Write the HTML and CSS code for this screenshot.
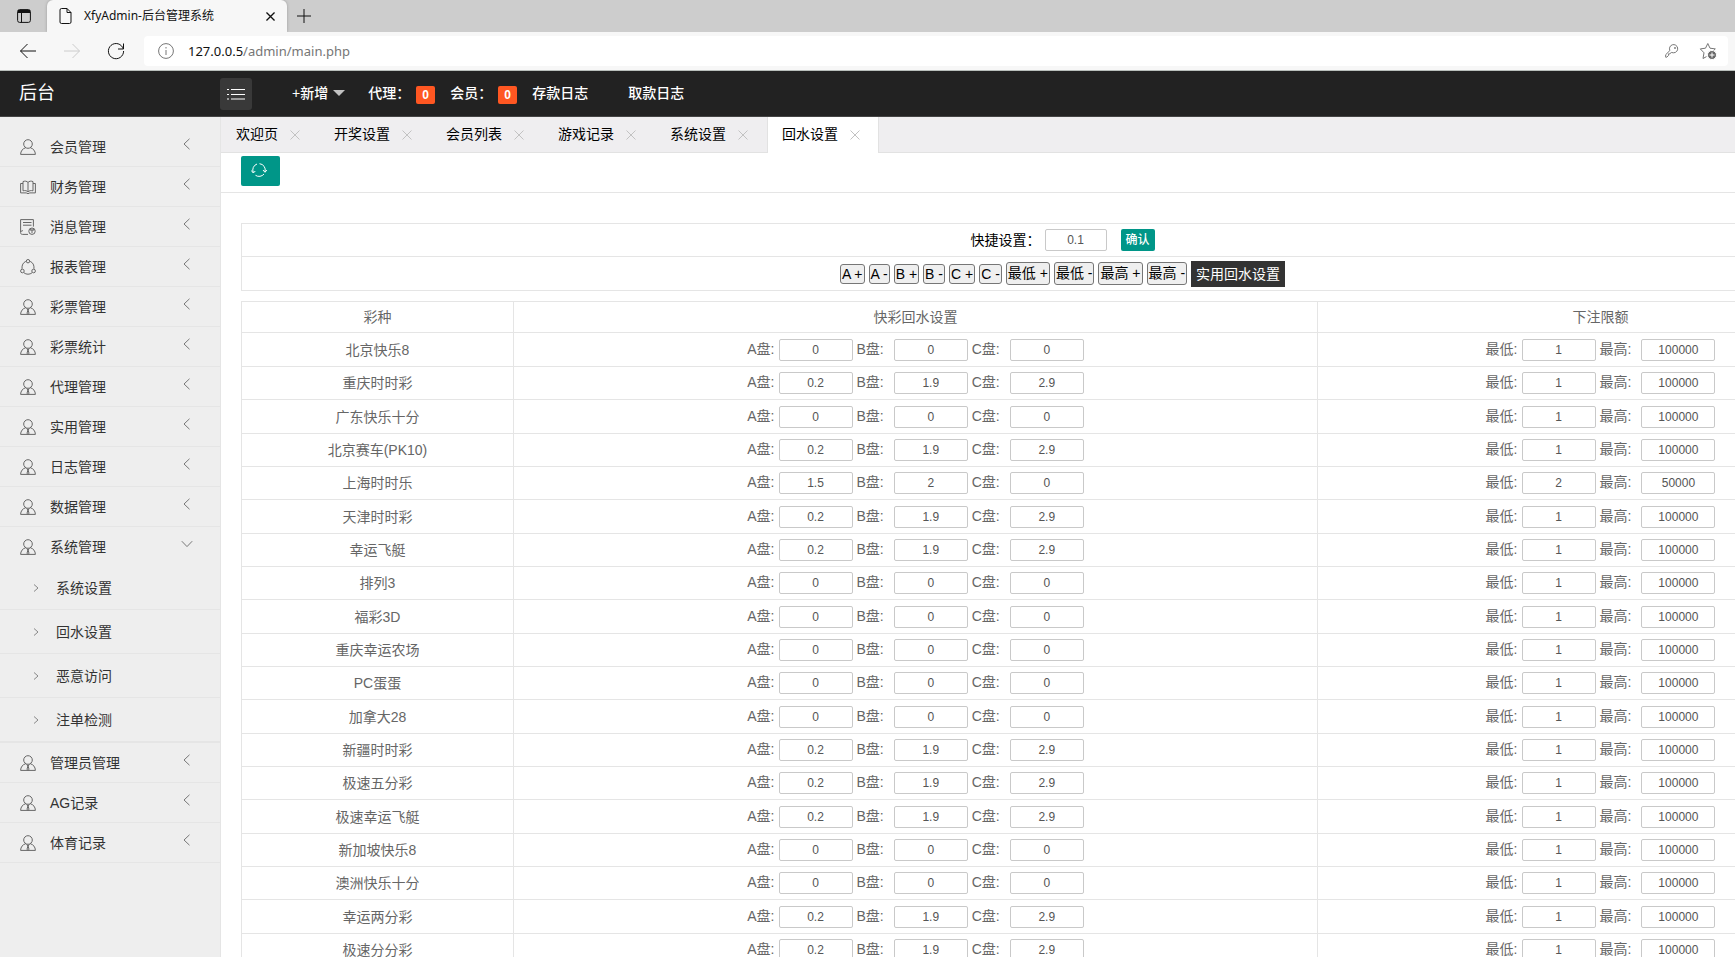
FILE: index.html
```html
<!DOCTYPE html>
<html lang="zh-CN">
<head>
<meta charset="utf-8">
<title>XfyAdmin-后台管理系统</title>
<link rel="stylesheet" href="styles.css">
</head>
<body>
<svg class="sprite" aria-hidden="true">
  <symbol id="i-user" viewBox="0 0 16 16"><circle cx="8" cy="5" r="4.3"/><path d="M5.7 8.7C2.6 9.6.7 12 .6 15.4h14.8c-.1-3.4-2-5.8-5.1-6.7"/></symbol>
  <symbol id="i-agent" viewBox="0 0 16 16"><circle cx="8" cy="5" r="4.3"/><path d="M5.7 8.7C2.6 9.6.7 12 .6 15.4h14.8c-.1-3.4-2-5.8-5.1-6.7M6.400 9.500l1.600 1.300 1.600-1.300M8 10.800l-1 3.400 1 1.200 1-1.200z"/></symbol>
  <symbol id="i-book" viewBox="0 0 16 16"><path d="M8 3.500C7 2 4.500 1.800 3 2.600v9.200c2-.5 4-.2 5 1.200 1-1.400 3-1.700 5-1.200V2.600C11.500 1.800 9 2 8 3.500zM8 3.500V13M3 4.500H.6v9.400h5.600l1.800.8 1.800-.8h5.600V4.500H13"/></symbol>
  <symbol id="i-note" viewBox="0 0 16 16"><path d="M8 15.400H2.500C1.300 15.400.6 14.800.6 13.500V.6h12.800v7M3 3.500h8.500M3 6.200h8.500M.8 13c.4-1 1-1.300 2.200-1.300"/><circle cx="12" cy="12.200" r="3.200"/><path d="M10.500 11h3M12 11v3M10.700 9.500v2M13.300 9.500v2"/></symbol>
  <symbol id="i-share" viewBox="0 0 16 16"><path d="M5.800 2.400C3.200 3.500 1.700 6 2 9.800M10.200 2.400c2.600 1.100 4.100 3.600 3.800 7.400M4 13.800c2.200 1.900 5.800 1.900 8 0"/><circle cx="8" cy="2.200" r="1.700"/><circle cx="2.400" cy="12" r="1.800"/><circle cx="13.600" cy="12" r="1.800"/></symbol>
  <symbol id="i-left" viewBox="0 0 12 12"><path d="M8.500.8 3 6l5.500 5.200"/></symbol>
  <symbol id="i-down" viewBox="0 0 12 12"><path d="M.8 3.200 6 8.600l5.200-5.400"/></symbol>
  <symbol id="i-right" viewBox="0 0 12 12"><path d="M4 2.500 8 6 4 9.500"/></symbol>
  <symbol id="i-close" viewBox="0 0 10 10"><path d="M.5.5l9 9M9.500.5l-9 9"/></symbol>
</svg>

<div class="browser">
  <div class="strip">
    <button class="icon-btn" aria-label="标签页操作"><svg width="16" height="16" viewBox="0 0 16 16"><rect x="1.600" y="1.600" width="12.800" height="12.800" rx="2"/><path d="M5.500 5v9.500"/><path d="M2 3.500h12" stroke-width="3"/></svg></button>
    <div class="page-tab">
      <svg width="14" height="18" viewBox="0 0 14 18"><path d="M2.500 1.500h5.500l4 4V15a1.500 1.500 0 0 1-1.500 1.500h-8A1.500 1.500 0 0 1 1 15V3a1.500 1.500 0 0 1 1.500-1.500zM8 1.500v4h4"/></svg>
      <span class="page-title">XfyAdmin-后台管理系统</span>
      <button class="tab-x" aria-label="关闭"><svg width="9" height="9"><use href="#i-close"/></svg></button>
    </div>
    <button class="icon-btn" aria-label="新建标签页"><svg width="16" height="16" viewBox="0 0 16 16"><path d="M8 1v14M1 8h14"/></svg></button>
  </div>
  <div class="nav">
    <button class="icon-btn" aria-label="后退"><svg width="18" height="16" viewBox="0 0 18 16"><path d="M17 8H1.500M8.500 1 1.500 8l7 7"/></svg></button>
    <button class="icon-btn off" aria-label="前进"><svg width="18" height="16" viewBox="0 0 18 16"><path d="M1 8h15.500M9.500 1l7 7-7 7"/></svg></button>
    <button class="icon-btn" aria-label="刷新"><svg width="18" height="18" viewBox="0 0 18 18"><path d="M16.300 7A7.600 7.600 0 1 0 16.600 9M16.500 1.500V7H11"/></svg></button>
    <div class="address">
      <svg width="16" height="16" viewBox="0 0 16 16"><circle cx="8" cy="8" r="7.400"/><path d="M8 7v5M8 4v1.500"/></svg>
      <span class="url"><b>127.0.0.5</b>/admin/main.php</span>
      <svg width="14" height="14" viewBox="0 0 14 14"><path d="M6.300 8.500 4.800 9.800H3.600v1.500l-1.800 1.900H.7v-2.500l4.200-4.200A4.100 4.100 0 1 1 8.700 8.800z"/><circle cx="10" cy="4" r=".6"/></svg>
      <svg class="star" width="18" height="18" viewBox="0 0 18 18"><path d="M8.800 1.500 11 6.200l5.300.7-3.800 3.700M8.800 1.500 6.500 6.200l-5.200.7L5 10.800 4 16.500l3.500-1.900"/><circle class="plus-bg" cx="13" cy="13" r="4.500"/><path class="plus" d="M13 10.500v5M10.500 13h5"/></svg>
    </div>
  </div>
</div>

<header class="top">
  <div class="logo">后台</div>
  <button class="toggle" aria-label="折叠菜单"><svg width="18" height="12" viewBox="0 0 18 12"><path d="M4 1.500h14M4 6.500h14M4 11h14M0 1.500h2M0 6.500h2M0 11h2"/></svg></button>
  <nav class="top-links">
    <a class="add" href="#">+新增<i class="caret"></i></a>
    <a class="count" href="#">代理：<span class="badge">0</span></a>
    <a class="count" href="#">会员：<span class="badge">0</span></a>
    <a class="log" href="#">存款日志</a>
    <a class="log" href="#">取款日志</a>
  </nav>
</header>

<div class="shell">
  <nav class="side">
    <a class="item" href="#"><svg><use href="#i-user"/></svg><span>会员管理</span><svg class="chev"><use href="#i-left"/></svg></a>
    <a class="item" href="#"><svg><use href="#i-book"/></svg><span>财务管理</span><svg class="chev"><use href="#i-left"/></svg></a>
    <a class="item" href="#"><svg><use href="#i-note"/></svg><span>消息管理</span><svg class="chev"><use href="#i-left"/></svg></a>
    <a class="item" href="#"><svg><use href="#i-share"/></svg><span>报表管理</span><svg class="chev"><use href="#i-left"/></svg></a>
    <a class="item" href="#"><svg><use href="#i-agent"/></svg><span>彩票管理</span><svg class="chev"><use href="#i-left"/></svg></a>
    <a class="item" href="#"><svg><use href="#i-agent"/></svg><span>彩票统计</span><svg class="chev"><use href="#i-left"/></svg></a>
    <a class="item" href="#"><svg><use href="#i-agent"/></svg><span>代理管理</span><svg class="chev"><use href="#i-left"/></svg></a>
    <a class="item" href="#"><svg><use href="#i-agent"/></svg><span>实用管理</span><svg class="chev"><use href="#i-left"/></svg></a>
    <a class="item" href="#"><svg><use href="#i-agent"/></svg><span>日志管理</span><svg class="chev"><use href="#i-left"/></svg></a>
    <a class="item" href="#"><svg><use href="#i-agent"/></svg><span>数据管理</span><svg class="chev"><use href="#i-left"/></svg></a>
    <a class="item open" href="#"><svg><use href="#i-agent"/></svg><span>系统管理</span><svg class="chev"><use href="#i-down"/></svg></a>
    <div class="sub">
      <a href="#"><svg><use href="#i-right"/></svg>系统设置</a>
      <a href="#"><svg><use href="#i-right"/></svg>回水设置</a>
      <a href="#"><svg><use href="#i-right"/></svg>恶意访问</a>
      <a href="#"><svg><use href="#i-right"/></svg>注单检测</a>
    </div>
    <a class="item" href="#"><svg><use href="#i-agent"/></svg><span>管理员管理</span><svg class="chev"><use href="#i-left"/></svg></a>
    <a class="item" href="#"><svg><use href="#i-agent"/></svg><span>AG记录</span><svg class="chev"><use href="#i-left"/></svg></a>
    <a class="item" href="#"><svg><use href="#i-agent"/></svg><span>体育记录</span><svg class="chev"><use href="#i-left"/></svg></a>
  </nav>

  <main class="main">
    <div class="tabs">
      <div class="tab"><a href="#">欢迎页</a><button aria-label="关闭"><svg><use href="#i-close"/></svg></button></div>
      <div class="tab"><a href="#">开奖设置</a><button aria-label="关闭"><svg><use href="#i-close"/></svg></button></div>
      <div class="tab"><a href="#">会员列表</a><button aria-label="关闭"><svg><use href="#i-close"/></svg></button></div>
      <div class="tab"><a href="#">游戏记录</a><button aria-label="关闭"><svg><use href="#i-close"/></svg></button></div>
      <div class="tab"><a href="#">系统设置</a><button aria-label="关闭"><svg><use href="#i-close"/></svg></button></div>
      <div class="tab active"><a href="#">回水设置</a><button aria-label="关闭"><svg><use href="#i-close"/></svg></button></div>
    </div>
    <div class="tools">
      <button class="refresh" aria-label="刷新"><svg width="16" height="16" viewBox="0 0 16 16"><path d="M2.300 10.500A6.300 6.300 0 0 1 6 2M8.500 1.700a6.300 6.300 0 0 1 5.500 8M13 12a6.300 6.300 0 0 1-8.500 1.300M.3 8.500l2 2.500 2-2M12 8l2 2.300L15.800 8"/></svg></button>
    </div>
    <div class="content">
      <div class="quick">
        <div class="quick-row">
          <label class="quick-set">快捷设置：<input class="field small" value="0.1"></label>
          <button class="confirm">确认</button>
        </div>
        <div class="quick-row steps">
          <button>A +</button><button>A -</button><button>B +</button><button>B -</button><button>C +</button><button>C -</button><button class="tall">最低 +</button><button class="tall">最低 -</button><button class="tall">最高 +</button><button class="tall">最高 -</button><a class="apply" href="#">实用回水设置</a>
        </div>
      </div>
      <table class="rates">
        <thead><tr><th class="c-name">彩种</th><th class="c-rate">快彩回水设置</th><th>下注限额</th></tr></thead>
        <tbody id="rows"></tbody>
      </table>
    </div>
  </main>
</div>
<script src="app.js"></script>
</body>
</html>
```
FILE: styles.css
```css
* { box-sizing: border-box; }
body {
  margin: 0;
  height: 100vh;
  overflow: hidden;
  display: flex;
  flex-direction: column;
  background: #fff;
  color: #333;
  font: 14px/20px "Liberation Sans", "Noto Sans CJK SC", sans-serif;
}
a { color: inherit; text-decoration: none; }
button { font: inherit; color: inherit; border: 0; padding: 0; background: none; cursor: pointer; }
svg { flex: none; fill: none; stroke: currentColor; }
.sprite { display: none; }

/* browser chrome */
.browser { flex: none; font-family: "Noto Sans", "Noto Sans CJK SC", sans-serif; color: #111; border-bottom: 1px solid #b9bfbb; }
.strip { display: flex; height: 32px; background: #cdcdcd; }
.icon-btn { display: flex; align-items: center; justify-content: center; width: 34px; }
.strip .icon-btn:first-child { width: 47px; }
.page-tab { display: flex; align-items: center; gap: 11px; width: 240px; padding: 0 12px; background: #f7f7f7; border-radius: 6px 6px 0 0; box-shadow: 0 0 3px #999; clip-path: inset(0 -4px 0 -4px); }
.page-title { flex: 1; font-size: 12px; white-space: nowrap; }
.tab-x { display: flex; }
.tab-x svg { stroke-width: 1.5; }
.nav { display: flex; align-items: center; height: 38px; padding: 0 7px 0 6px; background: #f7f7f7; }
.nav .icon-btn { width: 44px; height: 30px; }
.nav .off { color: #ccc; }
.address { flex: 1; display: flex; align-items: center; height: 30px; margin-left: 6px; padding: 0 11px 0 14px; background: #fff; border-radius: 4px; color: #767676; }
.url { flex: 1; margin-left: 14px; font-size: 13px; }
.url b { font-weight: 400; color: #111; }
.star { margin-left: 20px; }
.plus-bg { fill: #666; stroke: #fff; }
.plus { stroke: #fff; }

/* top bar */
.top { flex: none; display: flex; align-items: center; height: 46px; background: #222; border-bottom: 1px solid #444; color: #fff; }
.logo { width: 220px; padding: 0 0 2px 19px; font-size: 18px; }
.toggle { display: flex; align-items: center; justify-content: center; width: 32px; height: 32px; border-radius: 3px; background: #393939; }
.top-links { display: flex; align-items: center; margin-left: 40px; padding-bottom: 2px; font-weight: 500; }
.add { display: flex; align-items: center; gap: 5px; margin-right: 23px; }
.caret { border: 6px solid transparent; border-top-color: #c2c2c2; border-bottom: 0; }
.count { display: flex; align-items: center; gap: 6px; margin-right: 15px; }
.badge { width: 19px; height: 18px; margin-top: 4px; border-radius: 2px; background: #ff5722; font: bold 12px/18px "Liberation Sans", sans-serif; text-align: center; }
.log { margin-right: 40px; }

.shell { flex: 1; min-height: 0; display: flex; }

/* sidebar */
.side { flex: none; width: 221px; padding-top: 10px; background: #eee; border-right: 1px solid #e5e5e5; overflow: hidden; }
.item { display: flex; align-items: center; height: 40px; padding: 0 27px 0 20px; border-bottom: 1px solid #e5e5e5; }
.item.open { border-bottom-color: transparent; }
.item svg { width: 16px; height: 16px; color: #666; }
.item span { flex: 1; margin-left: 14px; }
.item .chev { width: 12px; height: 12px; margin-bottom: 6px; color: #777; }
.sub { margin-top: -1px; border-bottom: 1px solid #e5e5e5; }
.sub a { display: flex; align-items: center; gap: 14px; height: 44px; padding-left: 30px; border-bottom: 1px solid #e5e5e5; }
.sub svg { width: 12px; height: 12px; color: #888; }

/* main */
.main { flex: 1; min-width: 0; overflow: hidden; }
.tabs { display: flex; height: 36px; background: #efeef0; border-bottom: 1px solid #e2e2e2; color: #000; }
.tab { display: flex; align-items: center; gap: 12px; height: 35px; padding: 0 19px 0 15px; }
.tab a { padding-bottom: 2px; }
.tab button { display: flex; color: #c2c2c2; }
.tab button svg { width: 10px; height: 10px; }
.tab.active { height: 36px; padding: 0 18px 1px 14px; background: #fff; border: solid #e2e2e2; border-width: 0 1px; }
.tools { height: 40px; padding: 3px 20px; border-bottom: 1px solid #e5e5e5; }
.refresh { display: flex; align-items: center; justify-content: center; width: 39px; height: 30px; padding: 0 3px 2px 0; border-radius: 2px; background: #009688; color: #fff; }
.content { width: calc(100% + 169px); padding: 30px 20px; }
.quick { border: 1px solid #e5e5e5; color: #000; }
.quick-row { display: flex; align-items: center; justify-content: center; height: 32px; gap: 14px; }
.quick-row.steps { height: 34px; gap: 4px; border-top: 1px solid #e5e5e5; }
.quick-set { display: flex; align-items: center; gap: 4px; }
.field { width: 74px; height: 22px; padding: 0; border: 1px solid #c9c9c9; border-radius: 2px; background: #fff; color: #555; font: 12px/20px "Liberation Sans", sans-serif; text-align: center; }
.field.small { width: 62px; }
.confirm { width: 34px; height: 22px; border-radius: 2px; background: #009688; color: #fff; font-size: 12px; font-weight: 500; }
.steps button { height: 20px; padding: 0 1px; border: 1px solid #767676; border-radius: 3px; background: #efefef; line-height: 18px; white-space: nowrap; }
.steps .tall { height: 23px; line-height: 21px; }
.apply { padding: 3px 5px; background: #333; color: #fff; }
.rates { width: 100%; margin-top: 10px; border-collapse: collapse; table-layout: fixed; color: #666; text-align: center; }
.rates th, .rates td { height: 33px; padding: 0; border: 1px solid #e5e5e5; font-weight: 400; }
.rates th { height: 31px; }
.rates tbody tr:first-child td, .rates tbody tr:nth-child(3n) td { height: 34px; }
.c-name { width: 272px; }
.c-rate { width: 804px; }
.group { display: flex; align-items: center; justify-content: center; gap: 4px; }
.group label { display: flex; align-items: baseline; gap: 10px; }
.group label:first-child { gap: 4px; }
```
FILE: app.js
```js
const lotteries = [
  ["北京快乐8", 0, 0, 0, 1, 100000],
  ["重庆时时彩", 0.2, 1.9, 2.9, 1, 100000],
  ["广东快乐十分", 0, 0, 0, 1, 100000],
  ["北京赛车(PK10)", 0.2, 1.9, 2.9, 1, 100000],
  ["上海时时乐", 1.5, 2, 0, 2, 50000],
  ["天津时时彩", 0.2, 1.9, 2.9, 1, 100000],
  ["幸运飞艇", 0.2, 1.9, 2.9, 1, 100000],
  ["排列3", 0, 0, 0, 1, 100000],
  ["福彩3D", 0, 0, 0, 1, 100000],
  ["重庆幸运农场", 0, 0, 0, 1, 100000],
  ["PC蛋蛋", 0, 0, 0, 1, 100000],
  ["加拿大28", 0, 0, 0, 1, 100000],
  ["新疆时时彩", 0.2, 1.9, 2.9, 1, 100000],
  ["极速五分彩", 0.2, 1.9, 2.9, 1, 100000],
  ["极速幸运飞艇", 0.2, 1.9, 2.9, 1, 100000],
  ["新加坡快乐8", 0, 0, 0, 1, 100000],
  ["澳洲快乐十分", 0, 0, 0, 1, 100000],
  ["幸运两分彩", 0.2, 1.9, 2.9, 1, 100000],
  ["极速分分彩", 0.2, 1.9, 2.9, 1, 100000]
];

const field = (label, value) =>
  `<label>${label}:<input class="field" value="${value}"></label>`;

document.getElementById("rows").innerHTML = lotteries.map(([name, a, b, c, min, max]) => `
  <tr>
    <td>${name}</td>
    <td><div class="group">${field("A盘", a)}${field("B盘", b)}${field("C盘", c)}</div></td>
    <td><div class="group">${field("最低", min)}${field("最高", max)}</div></td>
  </tr>`).join("");
```
